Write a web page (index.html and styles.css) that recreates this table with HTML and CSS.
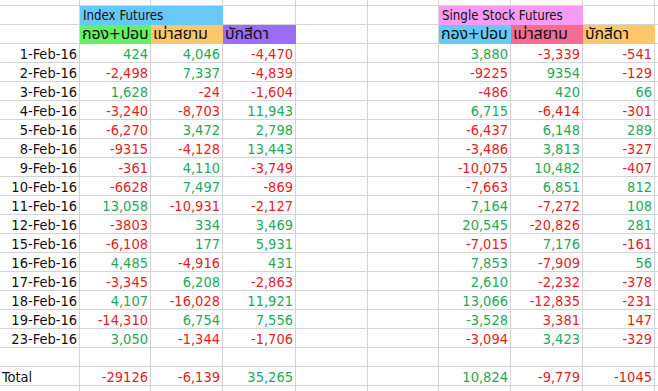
FILE: index.html
```html
<!DOCTYPE html>
<html>
<head>
<meta charset="utf-8">
<link rel="stylesheet" href="styles.css">
</head>
<body>
<div class="sheet">
  <!-- partial top row -->
  <div class="c"></div><div class="c"></div><div class="c"></div><div class="c"></div><div class="c"></div><div class="c"></div><div class="c"></div><div class="c"></div><div class="c"></div><div class="c"></div>
  <!-- group titles -->
  <div class="c"></div><div class="c t grp span2 f-blue">Index Futures</div><div class="c"></div><div class="c"></div><div class="c"></div><div class="c t grp span2 f-pink">Single Stock Futures</div><div class="c"></div><div class="c"></div>
  <!-- column titles -->
  <div class="c"></div><div class="c t th f-green">กอง+ปอบ</div><div class="c t th f-orange">เม่าสยาม</div><div class="c t th f-purple">บักสีดา</div><div class="c"></div><div class="c"></div><div class="c t th f-blue">กอง+ปอบ</div><div class="c t th f-rose">เม่าสยาม</div><div class="c t th f-orange">บักสีดา</div><div class="c"></div>

  <div class="c n">1-Feb-16</div><div class="c n g">424</div><div class="c n g">4,046</div><div class="c n r">-4,470</div><div class="c"></div><div class="c"></div><div class="c n g">3,880</div><div class="c n r">-3,339</div><div class="c n r">-541</div><div class="c"></div>
  <div class="c n">2-Feb-16</div><div class="c n r">-2,498</div><div class="c n g">7,337</div><div class="c n r">-4,839</div><div class="c"></div><div class="c"></div><div class="c n r">-9225</div><div class="c n g">9354</div><div class="c n r">-129</div><div class="c"></div>
  <div class="c n">3-Feb-16</div><div class="c n g">1,628</div><div class="c n r">-24</div><div class="c n r">-1,604</div><div class="c"></div><div class="c"></div><div class="c n r">-486</div><div class="c n g">420</div><div class="c n g">66</div><div class="c"></div>
  <div class="c n">4-Feb-16</div><div class="c n r">-3,240</div><div class="c n r">-8,703</div><div class="c n g">11,943</div><div class="c"></div><div class="c"></div><div class="c n g">6,715</div><div class="c n r">-6,414</div><div class="c n r">-301</div><div class="c"></div>
  <div class="c n">5-Feb-16</div><div class="c n r">-6,270</div><div class="c n g">3,472</div><div class="c n g">2,798</div><div class="c"></div><div class="c"></div><div class="c n r">-6,437</div><div class="c n g">6,148</div><div class="c n g">289</div><div class="c"></div>
  <div class="c n">8-Feb-16</div><div class="c n r">-9315</div><div class="c n r">-4,128</div><div class="c n g">13,443</div><div class="c"></div><div class="c"></div><div class="c n r">-3,486</div><div class="c n g">3,813</div><div class="c n r">-327</div><div class="c"></div>
  <div class="c n">9-Feb-16</div><div class="c n r">-361</div><div class="c n g">4,110</div><div class="c n r">-3,749</div><div class="c"></div><div class="c"></div><div class="c n r">-10,075</div><div class="c n g">10,482</div><div class="c n r">-407</div><div class="c"></div>
  <div class="c n">10-Feb-16</div><div class="c n r">-6628</div><div class="c n g">7,497</div><div class="c n r">-869</div><div class="c"></div><div class="c"></div><div class="c n r">-7,663</div><div class="c n g">6,851</div><div class="c n g">812</div><div class="c"></div>
  <div class="c n">11-Feb-16</div><div class="c n g">13,058</div><div class="c n r">-10,931</div><div class="c n r">-2,127</div><div class="c"></div><div class="c"></div><div class="c n g">7,164</div><div class="c n r">-7,272</div><div class="c n g">108</div><div class="c"></div>
  <div class="c n">12-Feb-16</div><div class="c n r">-3803</div><div class="c n g">334</div><div class="c n g">3,469</div><div class="c"></div><div class="c"></div><div class="c n g">20,545</div><div class="c n r">-20,826</div><div class="c n g">281</div><div class="c"></div>
  <div class="c n">15-Feb-16</div><div class="c n r">-6,108</div><div class="c n g">177</div><div class="c n g">5,931</div><div class="c"></div><div class="c"></div><div class="c n r">-7,015</div><div class="c n g">7,176</div><div class="c n r">-161</div><div class="c"></div>
  <div class="c n">16-Feb-16</div><div class="c n g">4,485</div><div class="c n r">-4,916</div><div class="c n g">431</div><div class="c"></div><div class="c"></div><div class="c n g">7,853</div><div class="c n r">-7,909</div><div class="c n g">56</div><div class="c"></div>
  <div class="c n">17-Feb-16</div><div class="c n r">-3,345</div><div class="c n g">6,208</div><div class="c n r">-2,863</div><div class="c"></div><div class="c"></div><div class="c n g">2,610</div><div class="c n r">-2,232</div><div class="c n r">-378</div><div class="c"></div>
  <div class="c n">18-Feb-16</div><div class="c n g">4,107</div><div class="c n r">-16,028</div><div class="c n g">11,921</div><div class="c"></div><div class="c"></div><div class="c n g">13,066</div><div class="c n r">-12,835</div><div class="c n r">-231</div><div class="c"></div>
  <div class="c n">19-Feb-16</div><div class="c n r">-14,310</div><div class="c n g">6,754</div><div class="c n g">7,556</div><div class="c"></div><div class="c"></div><div class="c n g">-3,528</div><div class="c n r">3,381</div><div class="c n r">147</div><div class="c"></div>
  <div class="c n">23-Feb-16</div><div class="c n g">3,050</div><div class="c n r">-1,344</div><div class="c n r">-1,706</div><div class="c"></div><div class="c"></div><div class="c n r">-3,094</div><div class="c n g">3,423</div><div class="c n r">-329</div><div class="c"></div>

  <div class="c"></div><div class="c"></div><div class="c"></div><div class="c"></div><div class="c"></div><div class="c"></div><div class="c"></div><div class="c"></div><div class="c"></div><div class="c"></div>

  <div class="c t">Total</div><div class="c n r">-29126</div><div class="c n r">-6,139</div><div class="c n g">35,265</div><div class="c"></div><div class="c"></div><div class="c n g">10,824</div><div class="c n r">-9,779</div><div class="c n r">-1045</div><div class="c"></div>

  <div class="c"></div><div class="c"></div><div class="c"></div><div class="c"></div><div class="c"></div><div class="c"></div><div class="c"></div><div class="c"></div><div class="c"></div><div class="c"></div>
</div>
</body>
</html>
```
FILE: styles.css
```css
html, body {
  margin: 0;
  padding: 0;
  background: #ffffff;
  overflow: hidden;
}

.sheet {
  display: grid;
  grid-template-columns: 80px 71px 72px 73px 72px 71px 72px 72px 72px 72px;
  grid-template-rows: 6px;
  grid-auto-rows: 19px;
  width: 658px;
  height: 391px;
  overflow: hidden;
  font-family: "DejaVu Sans Condensed", "DejaVu Sans", "Noto Sans Thai", Tahoma, sans-serif;
  font-stretch: condensed;
  font-size: 14.5px;
  color: #111111;
}

.c {
  box-sizing: border-box;
  border-right: 1px solid #d4d4d4;
  border-bottom: 1px solid #d4d4d4;
  padding: 2px 2px 0 2px;
  line-height: 16px;
  white-space: nowrap;
  overflow: hidden;
}

.n { text-align: right; }
.t { text-align: left; }
.grp { font-size: 13.2px; padding-left: 3px; }
.th { font-size: 16px; letter-spacing: -0.2px; padding-top: 1px; }
.span2 { grid-column: span 2; }

.g { color: #26a85a; }
.r { color: #e41d27; }

.f-blue, .f-pink, .f-green, .f-orange, .f-purple, .f-rose {
  border-color: transparent;
}
.f-blue { background: #66c9f8; }
.f-pink { background: #f79bf4; }
.f-green { background: #66f064; }
.f-orange { background: #fec76c; }
.f-purple { background: #9b6cf5; }
.f-rose { background: #f66b93; }
```
